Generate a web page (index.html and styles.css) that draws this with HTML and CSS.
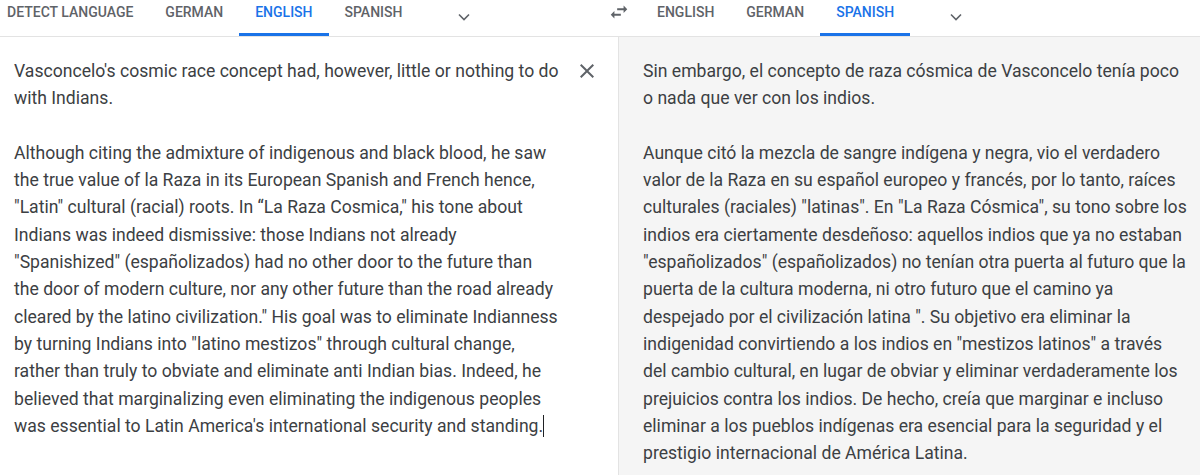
FILE: index.html
```html
<!DOCTYPE html>
<html lang="en">
<head>
<meta charset="utf-8">
<title>Translate</title>
<link rel="stylesheet" href="styles.css">
</head>
<body>
<div class="app">
  <div class="bar">
    <div class="side src-side">
      <div class="tab first">Detect language</div>
      <div class="tab">German</div>
      <div class="tab active">English</div>
      <div class="tab">Spanish</div>
      <div class="chev"><svg viewBox="0 0 12 8" width="12" height="8"><polyline points="1,1.5 6,6.5 11,1.5" fill="none" stroke="#5f6368" stroke-width="1.6"/></svg></div>
    </div>
    <div class="swap"><svg viewBox="0 0 24 24" width="22" height="22"><path d="M6.99 11 3 15l3.99 4v-3H14v-2H6.99v-3zM21 9l-3.99-4v3H10v2h7.01v3L21 9z" fill="#5f6368"/></svg></div>
    <div class="side tgt-side">
      <div class="tab">English</div>
      <div class="tab">German</div>
      <div class="tab active">Spanish</div>
      <div class="chev"><svg viewBox="0 0 12 8" width="12" height="8"><polyline points="1,1.5 6,6.5 11,1.5" fill="none" stroke="#5f6368" stroke-width="1.6"/></svg></div>
    </div>
  </div>
  <div class="panels">
    <div class="pane src">
      <div class="text">
        <p>Vasconcelo's cosmic race concept had, however, little or nothing to do with Indians.</p>
        <p>Although citing the admixture of indigenous and black blood, he saw the true value of la Raza in its European Spanish and French hence, "Latin" cultural (racial) roots. In “La Raza Cosmica," his tone about Indians was indeed dismissive: those Indians not already "Spanishized" (españolizados) had no other door to the future than the door of modern culture, nor any other future than the road already cleared by the latino civilization." His goal was to eliminate Indianness by turning Indians into "latino mestizos" through cultural change, rather than truly to obviate and eliminate anti Indian bias. Indeed, he believed that marginalizing even eliminating the indigenous peoples was essential to Latin America's international security and standing.<span class="caret"></span></p>
      </div>
      <div class="clear"><svg viewBox="0 0 24 24" width="24" height="24"><path d="M19 6.41 17.59 5 12 10.59 6.41 5 5 6.41 10.59 12 5 17.59 6.41 19 12 13.41 17.59 19 19 17.59 13.41 12z" fill="#5f6368"/></svg></div>
    </div>
    <div class="pane tgt">
      <div class="text">
        <p>Sin embargo, el concepto de raza cósmica de Vasconcelo tenía poco o nada que ver con los indios.</p>
        <p>Aunque citó la mezcla de sangre indígena y negra, vio el verdadero valor de la Raza en su español europeo y francés, por lo tanto, raíces culturales (raciales) "latinas". En "La Raza Cósmica", su tono sobre los indios era ciertamente desdeñoso: aquellos indios que ya no estaban "españolizados" (españolizados) no tenían otra puerta al futuro que la puerta de la cultura moderna, ni otro futuro que el camino ya despejado por el civilización latina ". Su objetivo era eliminar la indigenidad convirtiendo a los indios en "mestizos latinos" a través del cambio cultural, en lugar de obviar y eliminar verdaderamente los prejuicios contra los indios. De hecho, creía que marginar e incluso eliminar a los pueblos indígenas era esencial para la seguridad y el prestigio internacional de América Latina.</p>
      </div>
    </div>
  </div>
</div>
</body>
</html>
```
FILE: styles.css
```css
html, body {
  margin: 0;
  padding: 0;
  background: #fff;
}
body {
  font-family: Roboto, "Liberation Sans", sans-serif;
  width: 1200px;
  height: 475px;
  overflow: hidden;
}
.app {
  display: flex;
  flex-direction: column;
  height: 475px;
}
.bar {
  display: flex;
  height: 36px;
  border-bottom: 1px solid #e3e3e3;
  flex: none;
}
.side {
  display: flex;
  align-items: stretch;
}
.src-side {
  width: 600px;
}
.tab {
  box-sizing: border-box;
  height: 36px;
  padding: 3px 16px 0;
  font-size: 14px;
  line-height: 18px;
  font-weight: 500;
  text-transform: uppercase;
  color: #5f6368;
  border-bottom: 3px solid transparent;
  white-space: nowrap;
}
.tab.first {
  padding-left: 7px;
}
.tab.active {
  color: #1a73e8;
  border-bottom-color: #1a73e8;
}
.chev {
  margin-left: 40px;
  padding-top: 6px;
}
.swap {
  width: 36px;
  display: flex;
  justify-content: center;
  padding-top: 1px;
  margin-left: 1px;
  margin-right: 4px;
}
.panels {
  flex: 1;
  display: flex;
}
.pane {
  box-sizing: border-box;
  color: #3c4043;
  font-size: 17.6px;
  line-height: 27.3px;
}
.pane p {
  margin: 0 0 27.3px;
}
.src {
  width: 618px;
  display: flex;
  padding: 21px 0 0 14px;
}
.src .text {
  width: 546px;
}
.clear {
  margin-left: 15px;
  padding-top: 1px;
  height: 24px;
}
.tgt {
  flex: 1;
  background: #f5f5f5;
  border-left: 1px solid #e3e3e3;
  padding: 21px 12px 0 24px;
}
.caret {
  display: inline-block;
  width: 1px;
  height: 22px;
  background: #202124;
  vertical-align: -5px;
}
```
